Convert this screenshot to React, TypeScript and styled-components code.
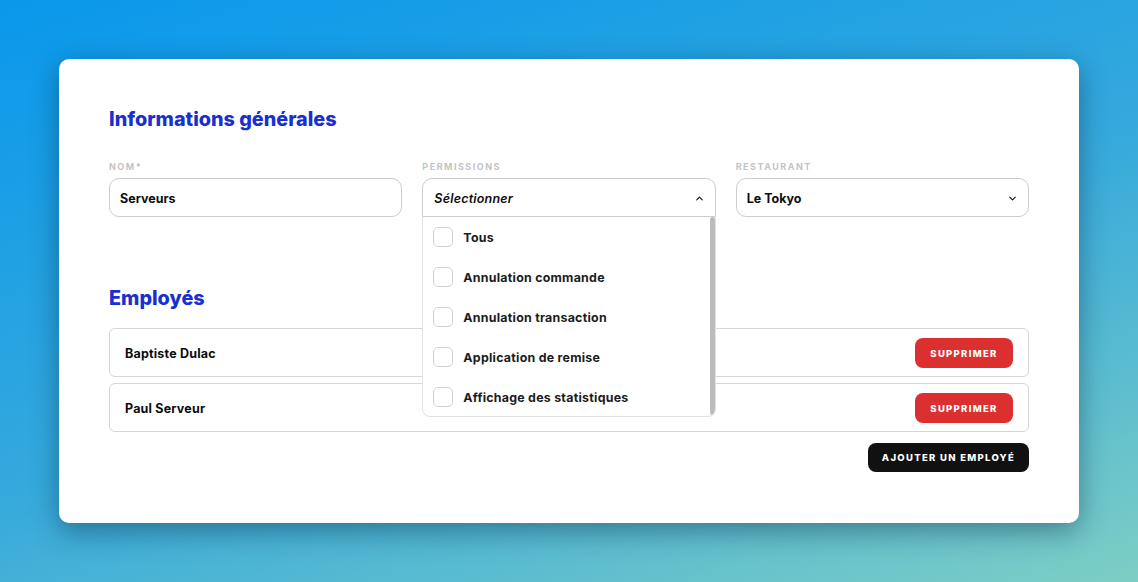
import styled, { createGlobalStyle } from 'styled-components';
import { ChevronDown, ChevronUp } from 'lucide-react';

const GlobalStyle = createGlobalStyle`
  * {
    box-sizing: border-box;
  }
  html, body {
    margin: 0;
    height: 100%;
  }
  body {
    font-family: Inter, 'Liberation Sans', sans-serif;
    overflow: hidden;
  }
`;

const Page = styled.div`
  width: 1138px;
  height: 582px;
  padding: 59px;
  background: linear-gradient(162deg, #0998ec 0%, #35a9dc 52%, #7dcec4 100%);
`;

const Card = styled.div`
  height: 464px;
  padding: 48px 50px 0;
  background-color: #fff;
  border-radius: 10px;
  box-shadow: 0 8px 28px rgba(0, 30, 60, 0.42);
`;

const Heading = styled.h2<{ $gap: number }>`
  margin: 0 0 ${(props) => props.$gap}px;
  height: 24px;
  font-size: 19.8px;
  line-height: 24px;
  font-weight: 800;
  color: #1a2fd0;
`;

const FieldGrid = styled.div`
  display: grid;
  grid-template-columns: repeat(3, 1fr);
  gap: 20px;
  margin-bottom: 69px;
`;

const Field = styled.div`
  position: relative;
`;

const Label = styled.label`
  display: block;
  height: 14px;
  margin-bottom: 4px;
  font-size: 9px;
  line-height: 14px;
  font-weight: 700;
  letter-spacing: 1.5px;
  color: #c4c4c4;
`;

const Control = styled.div<{ $open?: boolean }>`
  display: flex;
  align-items: center;
  justify-content: space-between;
  height: 39px;
  padding: 1px 10px 0;
  background-color: #fff;
  border: 1px solid #cccccc;
  border-radius: ${(props) => (props.$open ? '10px 10px 0 0' : '10px')};
  font-size: 12.5px;
  font-weight: 700;
  color: #0d0d0d;
`;

const Placeholder = styled.em`
  padding-left: 1px;
  font-style: italic;
  font-weight: 600;
  letter-spacing: 0.2px;
`;

const Menu = styled.div`
  position: absolute;
  top: 57px;
  left: 0;
  right: 0;
  z-index: 2;
  height: 200px;
  background-color: #fff;
  border: 1px solid #e2e2e2;
  border-top: none;
  border-radius: 0 0 8px 8px;
  overflow: hidden;
`;

const Scrollbar = styled.div`
  position: absolute;
  top: 0;
  right: 0;
  width: 5px;
  height: 198px;
  background-color: #bcbcbc;
  border-radius: 3px;
`;

const Option = styled.div`
  display: flex;
  align-items: center;
  gap: 10px;
  height: 40px;
  padding-left: 10px;
  font-size: 12.4px;
  font-weight: 700;
  letter-spacing: 0.25px;
  color: #1c1c1c;
`;

const Checkbox = styled.span`
  width: 20px;
  height: 20px;
  border: 1px solid #d2d2d2;
  border-radius: 5px;
  background-color: #fff;
`;

const EmployeeList = styled.div`
  display: flex;
  flex-direction: column;
  gap: 6px;
`;

const EmployeeRow = styled.div`
  display: flex;
  align-items: center;
  justify-content: space-between;
  height: 49px;
  padding: 1px 15px 0;
  border: 1px solid #d6d6d6;
  border-radius: 6px;
  font-size: 12.5px;
  font-weight: 700;
  letter-spacing: 0.2px;
  color: #0d0d0d;
`;

const Footer = styled.div`
  display: flex;
  justify-content: flex-end;
  margin-top: 11px;
`;

const Button = styled.button<{ $color: string; $width: number; $height: number }>`
  width: ${(props) => props.$width}px;
  height: ${(props) => props.$height}px;
  padding: 0;
  border: none;
  border-radius: 8px;
  background-color: ${(props) => props.$color};
  font-family: inherit;
  font-size: 9.5px;
  font-weight: 800;
  letter-spacing: 1.3px;
  color: #fff;
`;

const permissions = [
  'Tous',
  'Annulation commande',
  'Annulation transaction',
  'Application de remise',
  'Affichage des statistiques',
];

const employees = ['Baptiste Dulac', 'Paul Serveur'];

export default function App() {
  return (
    <Page>
      <GlobalStyle />
      <Card>
        <Heading $gap={29}>Informations générales</Heading>
        <FieldGrid>
          <Field>
            <Label>NOM*</Label>
            <Control>Serveurs</Control>
          </Field>
          <Field>
            <Label>PERMISSIONS</Label>
            <Control $open>
              <Placeholder>Sélectionner</Placeholder>
              <ChevronUp size={11} strokeWidth={2.4} />
            </Control>
            <Menu>
              {permissions.map((permission) => (
                <Option key={permission}>
                  <Checkbox />
                  {permission}
                </Option>
              ))}
              <Scrollbar />
            </Menu>
          </Field>
          <Field>
            <Label>RESTAURANT</Label>
            <Control>
              Le Tokyo
              <ChevronDown size={11} strokeWidth={2.4} />
            </Control>
          </Field>
        </FieldGrid>
        <Heading $gap={18}>Employés</Heading>
        <EmployeeList>
          {employees.map((employee) => (
            <EmployeeRow key={employee}>
              {employee}
              <Button $color="#dc3030" $width={98} $height={30}>
                SUPPRIMER
              </Button>
            </EmployeeRow>
          ))}
        </EmployeeList>
        <Footer>
          <Button $color="#111111" $width={161} $height={29}>
            AJOUTER UN EMPLOYÉ
          </Button>
        </Footer>
      </Card>
    </Page>
  );
}
